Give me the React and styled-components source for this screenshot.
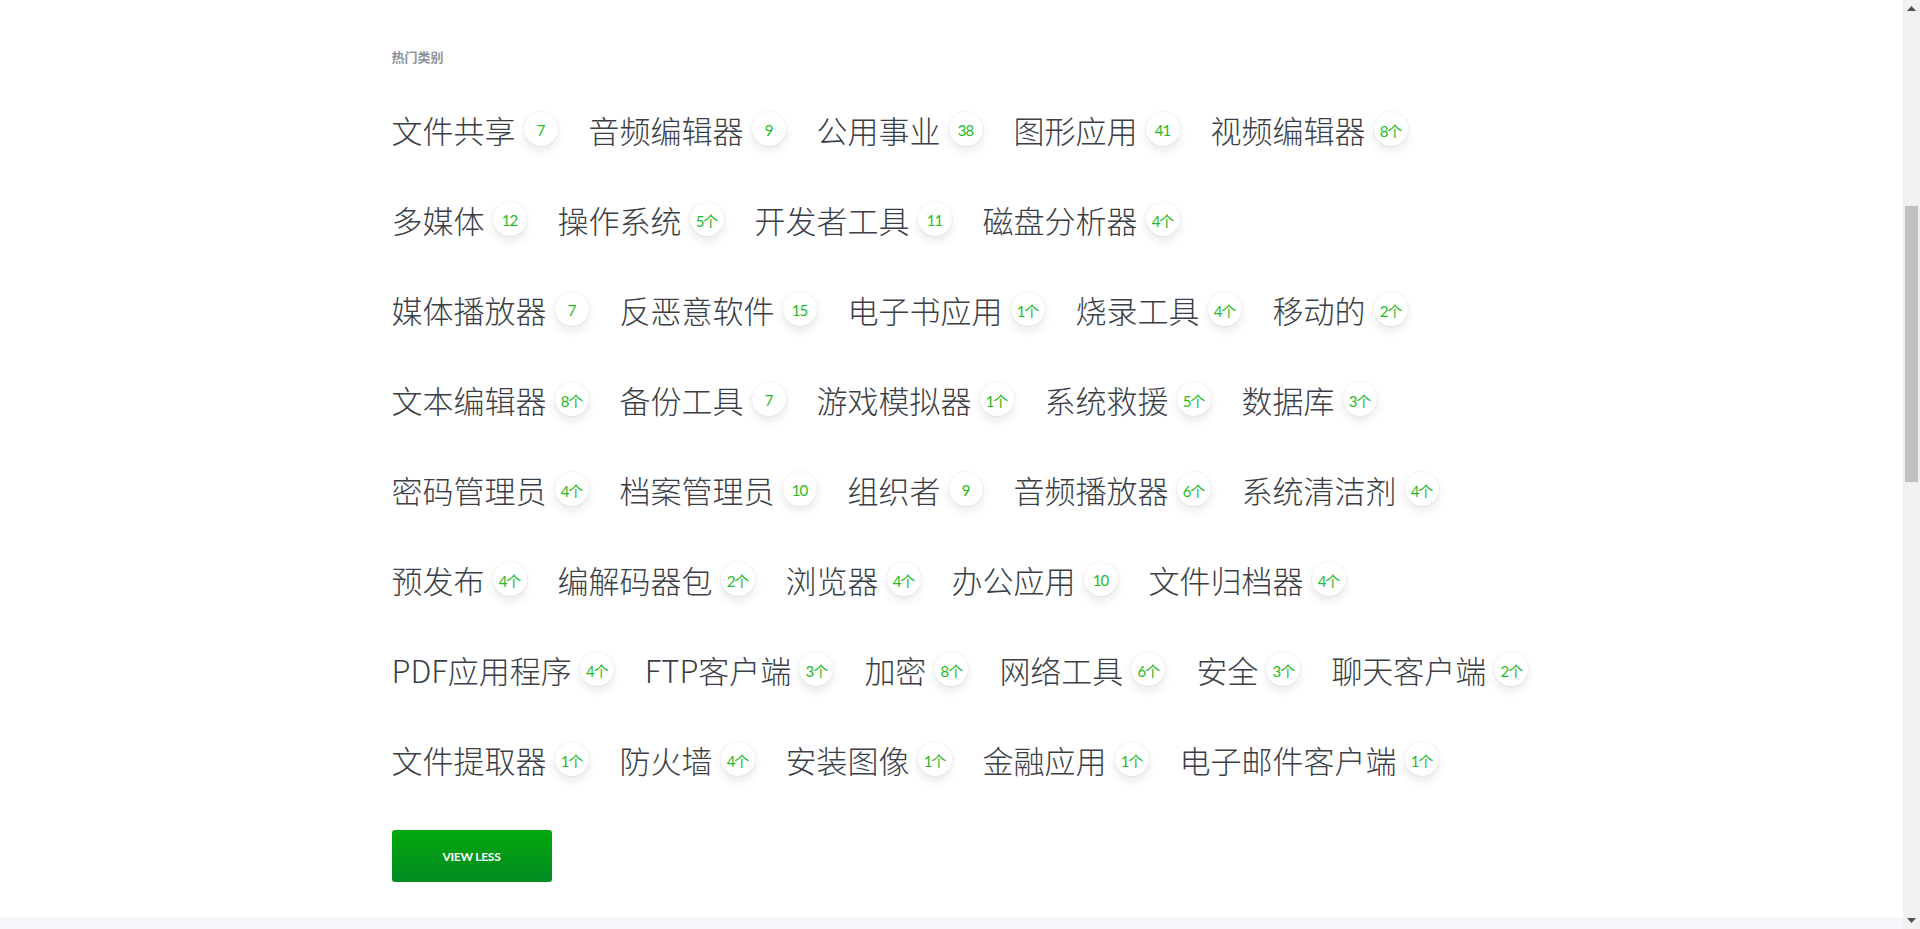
import React from "react";
import styled, { createGlobalStyle } from "styled-components";

const GlobalStyle = createGlobalStyle`
  html, body { margin: 0; padding: 0; height: 100%; background: #ffffff; }
  body { font-family: "Noto Sans CJK SC", "Noto Sans", sans-serif; overflow: hidden; }
  #root { height: 100%; }
`;

const rows = [
  [["文件共享", "7"], ["音频编辑器", "9"], ["公用事业", "38"], ["图形应用", "41"], ["视频编辑器", "8个"]],
  [["多媒体", "12"], ["操作系统", "5个"], ["开发者工具", "11"], ["磁盘分析器", "4个"]],
  [["媒体播放器", "7"], ["反恶意软件", "15"], ["电子书应用", "1个"], ["烧录工具", "4个"], ["移动的", "2个"]],
  [["文本编辑器", "8个"], ["备份工具", "7"], ["游戏模拟器", "1个"], ["系统救援", "5个"], ["数据库", "3个"]],
  [["密码管理员", "4个"], ["档案管理员", "10"], ["组织者", "9"], ["音频播放器", "6个"], ["系统清洁剂", "4个"]],
  [["预发布", "4个"], ["编解码器包", "2个"], ["浏览器", "4个"], ["办公应用", "10"], ["文件归档器", "4个"]],
  [["PDF应用程序", "4个"], ["FTP客户端", "3个"], ["加密", "8个"], ["网络工具", "6个"], ["安全", "3个"], ["聊天客户端", "2个"]],
  [["文件提取器", "1个"], ["防火墙", "4个"], ["安装图像", "1个"], ["金融应用", "1个"], ["电子邮件客户端", "1个"]],
];

const Page = styled.div`
  display: flex;
  height: 100vh;
  overflow: hidden;
`;

const Main = styled.main`
  flex: 1;
  display: flex;
  flex-direction: column;
  min-width: 0;
`;

const Section = styled.section`
  padding: 47px 0 35px;
  background: #ffffff;
`;

const Container = styled.div`
  max-width: 1120px;
  margin: 0 auto;
`;

const Heading = styled.h6`
  margin: 0;
  font-size: 13px;
  line-height: 20px;
  font-weight: 700;
  color: #8e939b;
`;

const List = styled.div`
  margin-top: 34px;
  display: flex;
  flex-direction: column;
  gap: 34px;
`;

const Row = styled.div`
  display: flex;
  align-items: center;
  height: 56px;
  gap: 31px;
`;

const Item = styled.a`
  display: flex;
  align-items: center;
  gap: 8px;
  text-decoration: none;
  cursor: pointer;
`;

const Label = styled.span`
  font-family: "Noto Sans CJK SC Light", "Noto Sans CJK SC DemiLight", "Noto Sans CJK SC", sans-serif;
  font-size: 31px;
  font-weight: 300;
  line-height: 1;
  color: #3a3e46;
  white-space: nowrap;
`;

const Badge = styled.span`
  width: 34px;
  height: 34px;
  border-radius: 50%;
  background: #ffffff;
  box-shadow: 0 0 0 1px rgba(0, 0, 0, 0.035), 0 5px 10px rgba(0, 0, 0, 0.09);
  display: flex;
  align-items: center;
  justify-content: center;
  font-family: "Lato", "Noto Sans CJK SC", sans-serif;
  font-size: 15px;
  font-weight: 400;
  letter-spacing: -1px;
  color: #1fba27;
  white-space: nowrap;
  padding-top: 2px;
  box-sizing: border-box;
`;

const Button = styled.button`
  margin-top: 43px;
  width: 160px;
  height: 52px;
  border: none;
  border-radius: 3px;
  background: linear-gradient(180deg, #03aa0c 0%, #018a22 100%);
  color: #ffffff;
  font-family: "Lato", "Liberation Sans", sans-serif;
  font-weight: 700;
  font-size: 12px;
  letter-spacing: -0.3px;
  cursor: pointer;
  text-transform: uppercase;
`;

const Footer = styled.footer`
  flex: 1;
  background: #f5f6fa;
`;

const ScrollTrack = styled.div`
  width: 17px;
  flex: 0 0 17px;
  background: #f1f1f1;
  display: flex;
  flex-direction: column;
  align-items: center;
`;

const Arrow = styled.div`
  height: 17px;
  width: 17px;
  display: flex;
  align-items: center;
  justify-content: center;
`;

const Thumb = styled.div`
  margin-top: 189px;
  width: 13px;
  height: 276px;
  background: #c1c1c1;
`;

const Spacer = styled.div`
  flex: 1;
`;

export default function App() {
  return (
    <>
      <GlobalStyle />
      <Page>
        <Main>
          <Section>
            <Container>
              <Heading>热门类别</Heading>
              <List>
                {rows.map((row, i) => (
                  <Row key={i}>
                    {row.map(([name, count]) => (
                      <Item key={name}>
                        <Label>{name}</Label>
                        <Badge>{count}</Badge>
                      </Item>
                    ))}
                  </Row>
                ))}
              </List>
              <Button>View Less</Button>
            </Container>
          </Section>
          <Footer />
        </Main>
        <ScrollTrack>
          <Arrow>
            <svg width="9" height="5" viewBox="0 0 9 5"><path d="M0 5 L4.5 0 L9 5 Z" fill="#505050" /></svg>
          </Arrow>
          <Thumb />
          <Spacer />
          <Arrow>
            <svg width="9" height="5" viewBox="0 0 9 5"><path d="M0 0 L4.5 5 L9 0 Z" fill="#505050" /></svg>
          </Arrow>
        </ScrollTrack>
      </Page>
    </>
  );
}
